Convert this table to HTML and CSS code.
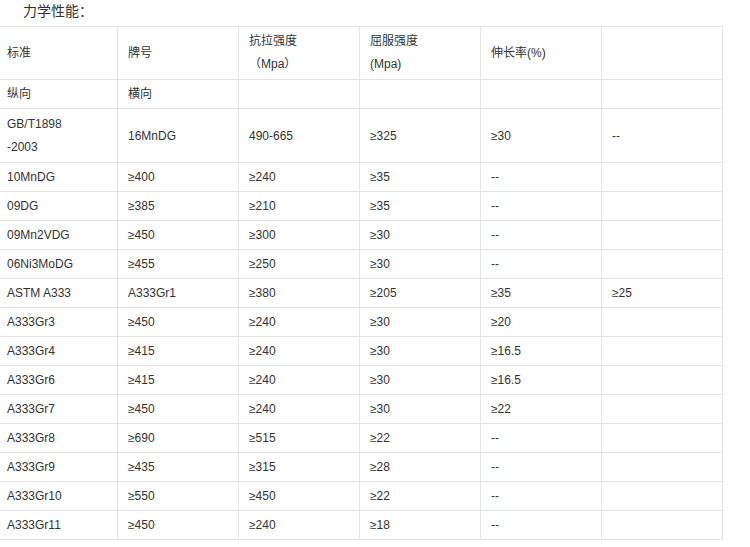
FILE: index.html
```html
<!DOCTYPE html>
<html>
<head>
<meta charset="utf-8">
<link rel="stylesheet" href="styles.css">
</head>
<body>
<p class="title">力学性能：</p>
<table class="props">
  <colgroup>
    <col class="c"><col class="c"><col class="c"><col class="c"><col class="c"><col class="c">
  </colgroup>
  <tr class="tall">
    <td>标准</td>
    <td>牌号</td>
    <td class="two">抗拉强度<br>（Mpa）</td>
    <td class="two">屈服强度<br>(Mpa)</td>
    <td>伸长率(%)</td>
    <td></td>
  </tr>
  <tr><td>纵向</td><td>横向</td><td></td><td></td><td></td><td></td></tr>
  <tr class="tall2">
    <td class="two">GB/T1898<br>-2003</td>
    <td>16MnDG</td><td>490-665</td><td>≥325</td><td>≥30</td><td>--</td>
  </tr>
  <tr><td>10MnDG</td><td>≥400</td><td>≥240</td><td>≥35</td><td>--</td><td></td></tr>
  <tr><td>09DG</td><td>≥385</td><td>≥210</td><td>≥35</td><td>--</td><td></td></tr>
  <tr><td>09Mn2VDG</td><td>≥450</td><td>≥300</td><td>≥30</td><td>--</td><td></td></tr>
  <tr><td>06Ni3MoDG</td><td>≥455</td><td>≥250</td><td>≥30</td><td>--</td><td></td></tr>
  <tr><td>ASTM A333</td><td>A333Gr1</td><td>≥380</td><td>≥205</td><td>≥35</td><td>≥25</td></tr>
  <tr><td>A333Gr3</td><td>≥450</td><td>≥240</td><td>≥30</td><td>≥20</td><td></td></tr>
  <tr><td>A333Gr4</td><td>≥415</td><td>≥240</td><td>≥30</td><td>≥16.5</td><td></td></tr>
  <tr><td>A333Gr6</td><td>≥415</td><td>≥240</td><td>≥30</td><td>≥16.5</td><td></td></tr>
  <tr><td>A333Gr7</td><td>≥450</td><td>≥240</td><td>≥30</td><td>≥22</td><td></td></tr>
  <tr><td>A333Gr8</td><td>≥690</td><td>≥515</td><td>≥22</td><td>--</td><td></td></tr>
  <tr><td>A333Gr9</td><td>≥435</td><td>≥315</td><td>≥28</td><td>--</td><td></td></tr>
  <tr><td>A333Gr10</td><td>≥550</td><td>≥450</td><td>≥22</td><td>--</td><td></td></tr>
  <tr><td>A333Gr11</td><td>≥450</td><td>≥240</td><td>≥18</td><td>--</td><td></td></tr>
</table>
</body>
</html>
```

FILE: styles.css
```css
html, body {
  margin: 0;
  padding: 0;
  background: #ffffff;
  overflow: hidden;
}
body {
  font-family: "Liberation Sans", "Noto Sans CJK SC", sans-serif;
  color: #333333;
}
.title {
  margin: 0 0 4px 0;
  padding-left: 23px;
  font-size: 14px;
  line-height: 22px;
  color: #333333;
}
.props {
  border-collapse: collapse;
  table-layout: fixed;
  width: 727px;
  margin-left: -4px;
  font-size: 12px;
}
.props .c {
  width: 121px;
}
.props td {
  border: 1px solid #e3e3e3;
  padding: 0 0 0 10px;
  height: 28px;
  line-height: 22px;
  vertical-align: middle;
  white-space: nowrap;
  overflow: hidden;
}
.props tr.tall td {
  height: 52px;
}
.props tr.tall2 td {
  height: 53px;
}
.props td.two {
  line-height: 23px;
}
```
